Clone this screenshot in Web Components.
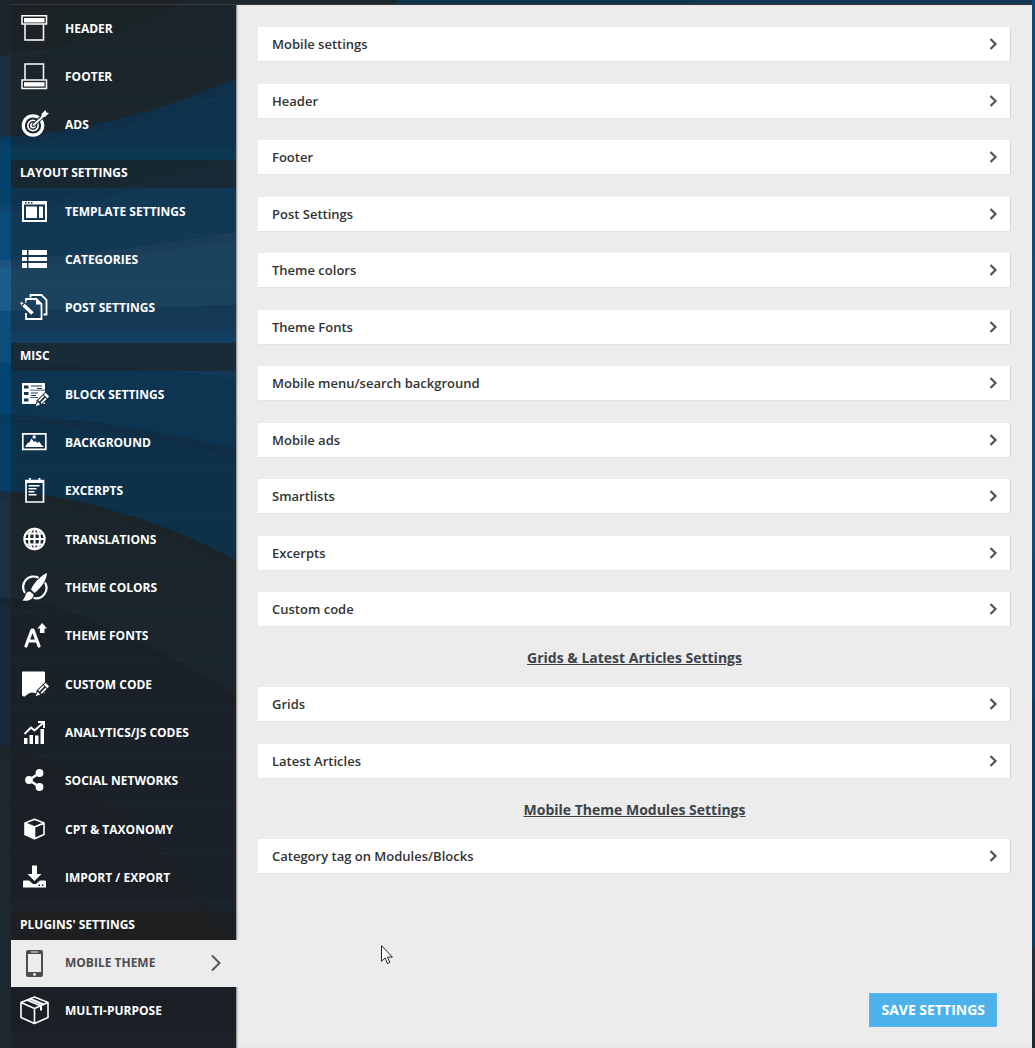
<!DOCTYPE html>
<html lang="en">
<head>
<meta charset="utf-8">
<title>Theme panel</title>
<style>
html,body{margin:0;min-height:100vh;background:#1b282e}
body{font-family:"Open Sans","Noto Sans",sans-serif;overflow:hidden}
</style>
</head>
<body>
<theme-panel>
  <nav-group slot="nav">
    <nav-item icon="header">HEADER</nav-item>
    <nav-item icon="footer">FOOTER</nav-item>
    <nav-item icon="ads">ADS</nav-item>
  </nav-group>
  <nav-group slot="nav" heading="LAYOUT SETTINGS">
    <nav-item icon="template">TEMPLATE SETTINGS</nav-item>
    <nav-item icon="categories">CATEGORIES</nav-item>
    <nav-item icon="post">POST SETTINGS</nav-item>
  </nav-group>
  <nav-group slot="nav" heading="MISC">
    <nav-item icon="block">BLOCK SETTINGS</nav-item>
    <nav-item icon="background">BACKGROUND</nav-item>
    <nav-item icon="excerpts">EXCERPTS</nav-item>
    <nav-item icon="globe">TRANSLATIONS</nav-item>
    <nav-item icon="brush">THEME COLORS</nav-item>
    <nav-item icon="fonts">THEME FONTS</nav-item>
    <nav-item icon="code">CUSTOM CODE</nav-item>
    <nav-item icon="chart">ANALYTICS/JS CODES</nav-item>
    <nav-item icon="share">SOCIAL NETWORKS</nav-item>
    <nav-item icon="cube">CPT &amp; TAXONOMY</nav-item>
    <nav-item icon="import">IMPORT / EXPORT</nav-item>
  </nav-group>
  <nav-group slot="nav" heading="PLUGINS' SETTINGS">
    <nav-item icon="phone" active>MOBILE THEME</nav-item>
    <nav-item icon="box">MULTI-PURPOSE</nav-item>
  </nav-group>

  <panel-group>
    <settings-panel>Mobile settings</settings-panel>
    <settings-panel>Header</settings-panel>
    <settings-panel>Footer</settings-panel>
    <settings-panel>Post Settings</settings-panel>
    <settings-panel>Theme colors</settings-panel>
    <settings-panel>Theme Fonts</settings-panel>
    <settings-panel>Mobile menu/search background</settings-panel>
    <settings-panel>Mobile ads</settings-panel>
    <settings-panel>Smartlists</settings-panel>
    <settings-panel>Excerpts</settings-panel>
    <settings-panel>Custom code</settings-panel>
  </panel-group>
  <panel-group heading="Grids &amp; Latest Articles Settings">
    <settings-panel>Grids</settings-panel>
    <settings-panel>Latest Articles</settings-panel>
  </panel-group>
  <panel-group heading="Mobile Theme Modules Settings">
    <settings-panel>Category tag on Modules/Blocks</settings-panel>
  </panel-group>
  <save-button slot="actions">SAVE SETTINGS</save-button>
</theme-panel>
<mouse-pointer></mouse-pointer>

<script>
const pencil = `<g transform="translate(21 21) rotate(45)"><path d="M-3.500-10h7v12.500l-3.500 6-3.500-6z" fill="var(--icon-gap,#142f43)"/><path d="M-2.500-9h5v2.500h-5zM-2.500-5.500h1.700v7h-1.700zM.8-5.500h1.700v7H.8zM-1.800 3h3.600L0 7.500z" fill="currentColor"/></g>`;
const ICONS = {
  header:`<g fill="none" stroke="currentColor" stroke-width="1.500"><path d="M2 1.800h24.500v8.200H2zM5 10v16h18.500V10"/></g><path d="M4 4h20.500v4.500H4z" fill="currentColor"/>`,
  footer:`<g fill="none" stroke="currentColor" stroke-width="1.500"><path d="M2 18h24.500v8.500H2zM5 18V2h18.500v16"/></g><path d="M4 20.200h20.500v4.300H4z" fill="currentColor"/>`,
  ads:`<g fill="none" stroke="currentColor"><circle cx="13" cy="15.500" r="9.700" stroke-width="3.200"/><circle cx="13" cy="15.500" r="5.200" stroke-width="1.600"/><circle cx="13" cy="15.500" r="2.200" stroke-width="1.600"/><path d="M13 15.500L24 5" stroke="#18303d" stroke-width="4"/><path d="M13 15.500L25 4.500" stroke-width="1.800"/></g><path d="M21.500 7V4l4-4 .8 2.500 2.700.5-4 4z" fill="currentColor"/>`,
  template:`<path fill-rule="evenodd" fill="currentColor" d="M2 4h25v21H2zM4 7.500v15.500h21V7.500zM5 5v1.400h1.500V5zM8 5v1.400h1.500V5zM11 5v1.400h1.500V5z"/><path fill="currentColor" d="M6 9.500h11v11.500H6zM19 9.500h4v11.500h-4z"/>`,
  categories:`<path fill="currentColor" d="M2 5h5v5H2zM8.500 5H27v5H8.500zM2 12h5v4H2zM8.500 12H27v4H8.500zM2 18h5v5H2zM8.500 18H27v5H8.500z"/>`,
  post:`<g fill="none" stroke="currentColor" stroke-width="1.800"><path d="M10.500 4.500V2h11l5 5v14.500h-3"/><path d="M6 8V6h10.500l5 5v15H6V20"/></g><path d="M16 5.500v6h6z" fill="currentColor"/><path d="M3.500 12l9 8.500" stroke="currentColor" stroke-width="3.600"/><path d="M1.500 8l.7 1.800L4 10l-1.700 1-.6 1.700-.7-1.700L0 10l1.300-.5zM5 8l2 1-2 1z" fill="currentColor"/>`,
  block:`<path fill="currentColor" fill-rule="evenodd" d="M2 3h23v21H2zM4 5.500v3h4.500v-3zM4 12v3h4.500v-3zM4 18.500v3h4.500v-3zM11 5.500v1h11v-1zM17 8v1h5V8zM10 9.700v.8h15v-.8zM11 12.500v1h7v-1zM11 15v1h5v-1zM10 17h8v.8h-8z"/>${pencil}`,
  background:`<path fill="none" stroke="currentColor" stroke-width="1.700" d="M2.800 5.800h23v15.500h-23z"/><path fill="currentColor" d="M5 19l3-4.500 1 .5 2.500-4.500 2.500 3.500 1.500-1 2 2 1.500-1.500 3 4 2 1.500zM12.500 9a1.700 1.700 0 1 1 3.400 0 1.700 1.700 0 0 1-3.400 0z"/>`,
  excerpts:`<path fill="none" stroke="currentColor" stroke-width="1.700" d="M6 4.500h17.500v21.500H6z"/><path fill="currentColor" d="M5.500 4h18.500v3H5.500zM9 2h2v4H9zM18.500 2h2v4h-2zM8.500 9h11v1.500h-11zM8.500 12h8v1.500h-8zM8.500 15h6v1.500h-6zM8.500 18h8v1.500h-8z"/>`,
  globe:`<g fill="none" stroke="currentColor" stroke-width="2"><circle cx="14.500" cy="14" r="10.200"/><ellipse cx="14.500" cy="14" rx="5.500" ry="10.200"/><path d="M14.500 3.500v21M4 14h21M6 8.500h17M6 19.500h17"/></g>`,
  brush:`<g fill="none" stroke="currentColor" stroke-width="2.200"><path d="M18.500 4.700A10.500 10.500 0 0 0 5 20M25 9.500A10.500 10.500 0 0 1 13.500 25"/></g><path fill="currentColor" d="M27 0C21.500 2 13.500 10 11 16.500l3.500 3.500C20.500 15.500 26.500 8 27 0zM10 18.500c-5 0-3.500 4.500-7.500 9 4.500 1 11-.5 11-6z"/>`,
  fonts:`<path fill="none" stroke="currentColor" stroke-width="3.200" stroke-linecap="round" stroke-linejoin="round" d="M6 25L12 9h1l6 16M8.500 20h8"/><path fill="currentColor" d="M22.200 2L27 7.500h-2.500V12h-4.600V7.500h-2.500z"/>`,
  code:`<path fill="currentColor" d="M3 1.500h21q1 0 1 1V23l-8 1q-6-4-12 2.500-3 0-3-2v-22q0-1 1-1z"/><g style="--icon-gap:#1b262d">${pencil}</g>`,
  chart:`<path fill="currentColor" d="M4 20h3.500v6H4zM9.500 17H13v9H9.500zM15 17.500h3.500V26H15zM20.500 11H24v15h-3.500z"/><path fill="none" stroke="currentColor" stroke-width="2" d="M4.500 16L11 9.500l3.500 3L23 5M18 4h6v6"/>`,
  share:`<path d="M19.500 7L9 14l10.500 7" fill="none" stroke="currentColor" stroke-width="2.500"/><g fill="currentColor"><circle cx="19.500" cy="7" r="3.900"/><circle cx="9" cy="14" r="3.900"/><circle cx="19.500" cy="21" r="3.900"/></g>`,
  cube:`<path d="M14.500 4.300l9.500 3.700v11.500l-9.500 4.300L5 19.500V8zM5 8l9.500 4L24 8M14.500 12v11" fill="none" stroke="currentColor" stroke-width="1.600" stroke-linejoin="round"/><path fill="currentColor" d="M5 8l9.500 4v11.500L5 19.500z"/>`,
  import:`<path fill="currentColor" d="M12 2.500h5V11h4.500l-7 7-7-7H12z"/><path fill="currentColor" fill-rule="evenodd" d="M4 17.500h5l4 3.500h3l4-3.500h5q1 0 1 1v6H3v-6q0-1 1-1zM18.500 21.500V23H20v-1.500zM22 21.500V23h1.500v-1.500z"/>`,
  phone:`<path fill="currentColor" fill-rule="evenodd" d="M8 1h13q2 0 2 2v23q0 2-2 2H8q-2 0-2-2V3q0-2 2-2zM8 5v18h13V5zM11 2.500v1h7v-1zM14.500 24a1.500 1.500 0 1 0 .1 0z"/>`,
  box:`<path d="M14.500 1L28 6.500v15L14.500 27.500 1 21.500v-15zM1 6.500l13.500 6L28 6.500M14.500 12.500v15" fill="none" stroke="currentColor" stroke-width="1.600" stroke-linejoin="round"/><path d="M7 3.800l14 6v4.700M10 2.600l13.500 5.900" fill="none" stroke="currentColor" stroke-width="2"/>`
};

class Base extends HTMLElement {
  render(html){ if(!this.shadowRoot) this.attachShadow({mode:'open'}).innerHTML = html; }
}

customElements.define('wave-backdrop', class extends Base {
  connectedCallback(){ this.render(`
<style>:host{display:block}svg{display:block;width:100%;height:100%}</style>
<svg viewBox="0 0 1035 1048" preserveAspectRatio="none" aria-hidden="true">
 <path fill="#1c272d" d="M0 0h1035v1048H0z"/>
 <path fill="#1a2f3c" d="M0 56Q100 44 190 0H1035V1048H0z"/>
 <path fill="#1a2d33" d="M11 54Q100 44 190 0H1035V1048H11z"/>
 <path fill="#05426b" d="M0 137Q120 130 236 78Q330 40 400 0H1035V1048H0z"/>
 <path fill="#0b4b79" d="M0 205Q120 192 236 157Q500 80 700 0H1035V1048H0z"/>
 <path fill="#1d5c89" d="M0 260Q120 252 236 232L1035 700V1048H0z"/>
 <path fill="#0d4d7b" d="M0 311L236 305 1035 250V1048H0z"/>
 <path fill="#044473" d="M0 362Q120 364 236 378L1035 560V1048H0z"/>
 <path fill="#053f67" d="M0 414Q120 420 236 449L1035 700V1048H0z"/>
 <path fill="#1b3040" d="M0 491Q120 500 236 560L1035 948V1048H0z"/>
 <path fill="#1a2c33" d="M11 491Q120 500 236 560L1035 1000V1048H11z"/>
 <path fill="#192937" d="M0 597Q90 606 236 696L600 1048H0z"/>
 <path fill="#1a252e" d="M11 598Q90 606 236 696L600 1048H11z"/>
 <path fill="#1b282e" d="M0 745Q110 775 236 950L300 1048H0z"/>
 <path fill="#1c232a" d="M11 747Q110 775 236 950L300 1048H11z"/>
 <g fill="none" stroke="#101820" stroke-opacity=".1" stroke-width="8">
  <path d="M0 141Q120 134 236 82"/><path d="M0 209Q120 196 236 161"/><path d="M0 264Q120 256 236 236"/>
  <path d="M0 418Q120 424 236 453"/><path d="M0 495Q120 504 236 564"/><path d="M0 601Q90 610 236 700"/><path d="M0 749Q110 779 236 954"/>
 </g>
</svg>`); }
});

customElements.define('theme-panel', class extends Base {
  connectedCallback(){ this.render(`
<style>
:host{display:grid;min-height:100vh}
wave-backdrop,.frame{grid-area:1/1}
wave-backdrop{height:100vh}
.frame{display:flex;flex-direction:column;margin:0 3px 0 11px;z-index:1;min-width:0}
.top{height:4px;background:rgba(30,32,34,.4);border-bottom:1px solid #3a3a3a}
.columns{display:flex;flex:1}
nav{width:225px;flex:none;background:rgba(30,32,34,.3)}
main{flex:1;background:#ececec;box-shadow:inset 2px 0 2px -1px rgba(0,0,0,.45);padding:22px 21px 0 22px}
.actions{display:flex;justify-content:flex-end;padding:119px 14px 21px 0}
</style>
<wave-backdrop></wave-backdrop>
<div class="frame">
 <div class="top"></div>
 <div class="columns">
  <nav aria-label="Theme sections"><slot name="nav"></slot></nav>
  <main><slot></slot><div class="actions"><slot name="actions"></slot></div></main>
 </div>
</div>`); }
});

customElements.define('nav-group', class extends Base {
  connectedCallback(){
    const h = this.getAttribute('heading');
    this.render(`
<style>
:host{display:block;padding-bottom:10px}
h2{margin:0;box-sizing:border-box;height:28px;padding-left:9px;background:rgba(32,30,30,.6);color:#fff;font-size:12px;line-height:26px;font-weight:700}
::slotted(nav-item:nth-child(3n)){padding-bottom:1px}
</style>
${h ? `<h2>${h}</h2>` : ''}<slot></slot>`); }
});

customElements.define('nav-item', class extends Base {
  connectedCallback(){
    const active = this.hasAttribute('active');
    this.render(`
<style>
:host{display:block;position:relative;background:rgba(26,28,34,.15);color:#fff}
:host([active]){background:#ececec;color:#4d4d4d;z-index:1;margin-right:-3px;padding-right:3px}
a{display:flex;align-items:center;gap:16px;box-sizing:border-box;height:48px;padding:0 14px 0 9px;border-bottom:1px solid rgba(90,150,190,.06);color:inherit;text-decoration:none;font-size:12px;line-height:16px;font-weight:700}
:host([active]) a{height:47px;border-color:transparent}
svg{flex:none}
.label{flex:1;white-space:nowrap}
</style>
<a href="#"${active?' aria-current="page"':''}><svg width="29" height="29" viewBox="0 0 29 29" aria-hidden="true">${ICONS[this.getAttribute('icon')]}</svg><span class="label"><slot></slot></span>${active?'<svg width="12" height="18" viewBox="0 0 12 18" aria-hidden="true"><path d="M2 1.500l7.500 7.500L2 16.500" fill="none" stroke="#555" stroke-width="2"/></svg>':''}</a>`); }
});

customElements.define('panel-group', class extends Base {
  connectedCallback(){
    const h = this.getAttribute('heading');
    this.render(`
<style>
:host{display:block}
h3{margin:0;height:60px;color:#3c434a;font-size:14px;line-height:62px;font-weight:700;text-align:center;text-decoration:underline}
::slotted(settings-panel){margin-bottom:22px}
::slotted(settings-panel:nth-child(even)){margin-bottom:21px}
::slotted(settings-panel:last-child){margin-bottom:0}
</style>
${h ? `<h3>${h.replace('&','&amp;')}</h3>` : ''}<slot></slot>`); }
});

customElements.define('settings-panel', class extends Base {
  connectedCallback(){ this.render(`
<style>
:host{display:block;height:35px}
button{display:flex;align-items:center;justify-content:space-between;box-sizing:border-box;width:100%;height:35px;margin:0;padding:0 12px 0 14px;border:0;border-right:1px solid #d6d6d6;border-bottom:1px solid #e4e4e4;background:#fff;color:#333;font:600 13px/18px "Open Sans","Noto Sans",sans-serif;text-align:left}
</style>
<button type="button" aria-expanded="false"><span><slot></slot></span><svg width="9" height="12" viewBox="0 0 9 12" aria-hidden="true"><path d="M1.500 1l5 5-5 5" fill="none" stroke="#555" stroke-width="2.200"/></svg></button>`); }
});

customElements.define('save-button', class extends Base {
  connectedCallback(){ this.render(`
<style>
:host{display:block}
button{box-sizing:border-box;height:34px;margin:0;padding:0 11px;border:1px solid #5ab9f1;background:#4db2ec;color:#fff;font:700 14px/18px "Open Sans","Noto Sans",sans-serif}
</style>
<button type="button"><slot></slot></button>`); }
});

customElements.define('mouse-pointer', class extends Base {
  connectedCallback(){ this.render(`
<style>:host{position:absolute;left:381px;top:945px;z-index:3;pointer-events:none}svg{display:block}</style>
<svg width="13" height="20" viewBox="0 0 13 20" aria-hidden="true"><path d="M.5.700v15.600l3.600-3.400 2.400 5.600 2.300-1-2.400-5.400h5z" fill="#fff" stroke="#222"/></svg>`); }
});
</script>
</body>
</html>
